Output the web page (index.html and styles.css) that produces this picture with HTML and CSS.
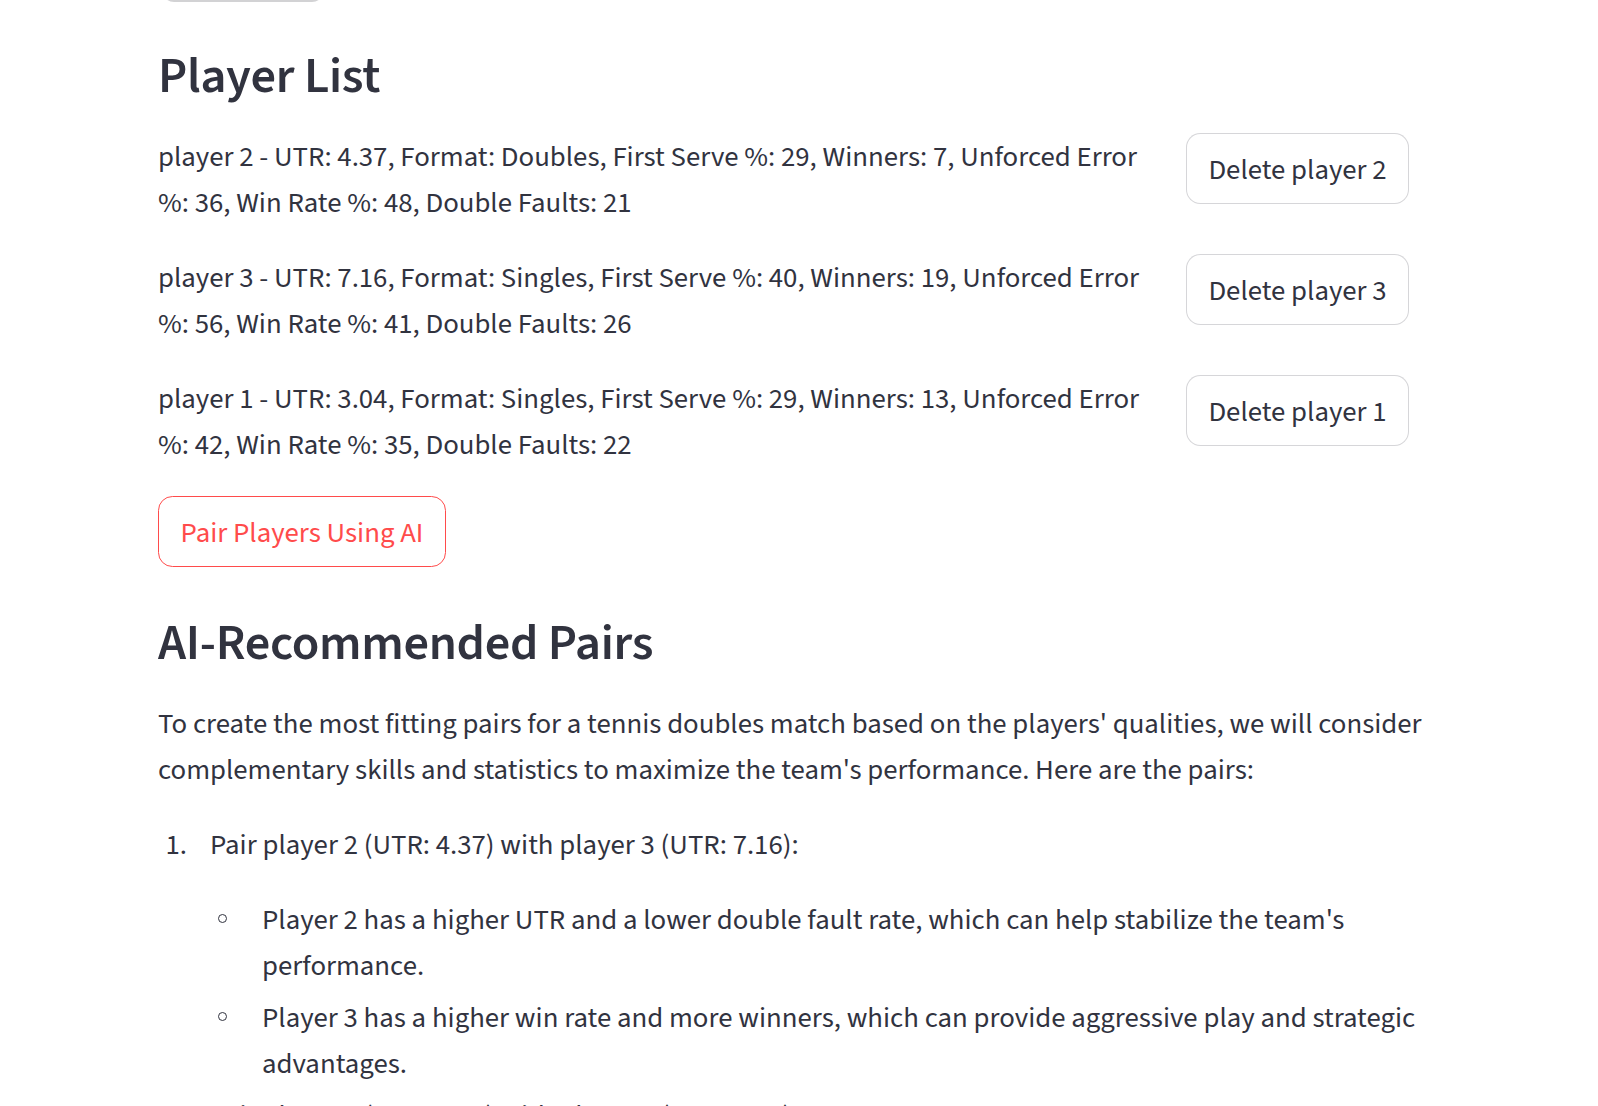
FILE: index.html
```html
<!DOCTYPE html>
<html lang="en">
<head>
<meta charset="utf-8">
<title>Player List</title>
<link rel="stylesheet" href="styles.css">
</head>
<body>
<main class="main">
  <div class="top-stub"></div>

  <h3 class="heading heading-first">Player List</h3>

  <div class="rows">
    <div class="row">
      <p class="row-text">player 2 - UTR: 4.37, Format: Doubles, First Serve %: 29, Winners: 7, Unforced Error %: 36, Win Rate %: 48, Double Faults: 21</p>
      <div class="row-action"><button class="btn">Delete player 2</button></div>
    </div>
    <div class="row">
      <p class="row-text">player 3 - UTR: 7.16, Format: Singles, First Serve %: 40, Winners: 19, Unforced Error %: 56, Win Rate %: 41, Double Faults: 26</p>
      <div class="row-action"><button class="btn">Delete player 3</button></div>
    </div>
    <div class="row">
      <p class="row-text">player 1 - UTR: 3.04, Format: Singles, First Serve %: 29, Winners: 13, Unforced Error %: 42, Win Rate %: 35, Double Faults: 22</p>
      <div class="row-action"><button class="btn">Delete player 1</button></div>
    </div>
  </div>

  <div class="pair-wrap"><button class="btn btn-active">Pair Players Using AI</button></div>

  <h3 class="heading heading-second">AI-Recommended Pairs</h3>

  <div class="md">
    <p>To create the most fitting pairs for a tennis doubles match based on the players' qualities, we will consider complementary skills and statistics to maximize the team's performance. Here are the pairs:</p>
    <ol>
      <li>
        <p>Pair player 2 (UTR: 4.37) with player 3 (UTR: 7.16):</p>
        <ul>
          <li>Player 2 has a higher UTR and a lower double fault rate, which can help stabilize the team's performance.</li>
          <li>Player 3 has a higher win rate and more winners, which can provide aggressive play and strategic advantages.</li>
        </ul>
      </li>
      <li>
        <p>Pair player 1 (UTR: 3.04) with player 2 (UTR: 4.37):</p>
      </li>
    </ol>
  </div>
</main>
</body>
</html>
```
FILE: styles.css
```css
html, body {
  margin: 0;
  padding: 0;
  background: #ffffff;
}

body {
  font-family: "Source Sans 3", "Source Sans Pro", "Noto Sans", sans-serif;
  font-size: 28.8px;
  line-height: 1.6;
  color: #31333f;
  overflow: hidden;
}

.main {
  width: 1267px;
  margin-left: 158px;
}

.top-stub {
  width: 162px;
  height: 40px;
  margin-top: -38px;
  margin-left: 4px;
  border-bottom: 2px solid #d2d2d4;
  border-radius: 0 0 12px 12px;
  box-sizing: border-box;
}

.heading {
  font-size: 50.4px;
  font-weight: 600;
  line-height: 1.2;
  margin: 0;
  padding: 0;
  color: #31333f;
  letter-spacing: -0.3px;
}

.heading-first {
  margin-top: 44px;
  margin-bottom: 26.5px;
}

.heading-second {
  margin-top: 46px;
  margin-bottom: 29px;
}

.rows {
  display: flex;
  flex-direction: column;
  gap: 28.8px;
}

.row {
  display: grid;
  grid-template-columns: 999px 1fr;
  column-gap: 28.8px;
  align-items: start;
}

.row-text {
  margin: 0 0 -2px 0;
  padding-top: 2px;
}

.btn {
  font-family: inherit;
  font-size: 28.8px;
  line-height: 1.6;
  color: #31333f;
  background: #ffffff;
  border: 1px solid rgba(49, 51, 63, 0.2);
  border-radius: 14.4px;
  height: 71px;
  padding: 6px 21.6px 0 21.6px;
  box-sizing: border-box;
  display: inline-flex;
  align-items: center;
  justify-content: center;
  cursor: pointer;
  white-space: nowrap;
}

.btn-active {
  color: #ff4b4b;
  border-color: #ff4b4b;
}

.pair-wrap {
  margin-top: 28.8px;
  display: flex;
}

.md p {
  margin: 0 0 28.8px 0;
}

.md ol {
  margin: 0;
  padding-left: 52px;
}

.md ol > li::marker {
  content: counter(list-item) ".\00a0\00a0\00a0\00a0";
  color: #31333f;
}

.md ul {
  margin: 0;
  padding-left: 52px;
  list-style: none;
}

.md ul > li {
  margin-bottom: 5.76px;
}

.md ul > li::before {
  content: "";
  display: inline-block;
  box-sizing: border-box;
  width: 9px;
  height: 9px;
  border: 1.3px solid #31333f;
  border-radius: 50%;
  margin-left: -44.5px;
  margin-right: 35.5px;
  vertical-align: 0.22em;
}

.md ol > li + li {
  margin-top: 5px;
}
```
